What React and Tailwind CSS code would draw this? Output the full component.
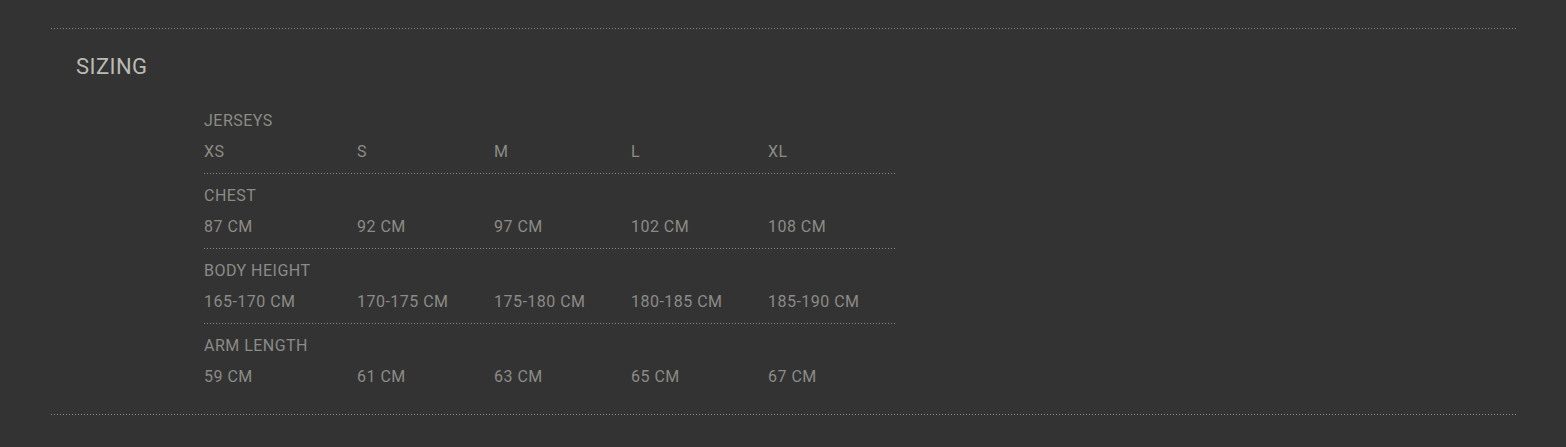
const sizes = ["XS", "S", "M", "L", "XL"];

const rows = [
  { label: "CHEST", values: ["87 CM", "92 CM", "97 CM", "102 CM", "108 CM"] },
  {
    label: "BODY HEIGHT",
    values: ["165-170 CM", "170-175 CM", "175-180 CM", "180-185 CM", "185-190 CM"],
  },
  { label: "ARM LENGTH", values: ["59 CM", "61 CM", "63 CM", "65 CM", "67 CM"] },
];

const colWidths = ["w-[153px]", "w-[137px]", "w-[137px]", "w-[137px]", "w-[127px]"];

function DottedLine() {
  return (
    <div className="h-px w-full bg-[linear-gradient(to_right,#8a8a86_1px,transparent_1px)] bg-[length:3px_1px]" />
  );
}

function Cells({ items }) {
  return (
    <div className="flex h-[31px] items-center">
      {items.map((item, index) => (
        <div key={index} className={`${colWidths[index]} shrink-0`}>
          {item}
        </div>
      ))}
    </div>
  );
}

export default function App() {
  return (
    <div
      className="min-h-[447px] w-full bg-[#333333] pl-[51px] pr-[50px] pt-[28px]"
      style={{ fontFamily: "Roboto, 'Liberation Sans', sans-serif" }}
    >
      <DottedLine />
      <h2 className="mt-[23px] pl-[25px] text-[22px] leading-[30px] tracking-[0.02em] text-[#bbbbb4]">
        SIZING
      </h2>
      <div className="ml-[153px] mt-[23px] w-[691px] text-[16px] tracking-[0.03em] text-[#8b8b87]">
        <div className="pb-[6px]">
          <div className="flex h-[31px] items-center">JERSEYS</div>
          <Cells items={sizes} />
        </div>
        {rows.map((row) => (
          <div key={row.label}>
            <DottedLine />
            <div className="py-[6px]">
              <div className="flex h-[31px] items-center">{row.label}</div>
              <Cells items={row.values} />
            </div>
          </div>
        ))}
      </div>
      <div className="mt-[16px]">
        <DottedLine />
      </div>
    </div>
  );
}
